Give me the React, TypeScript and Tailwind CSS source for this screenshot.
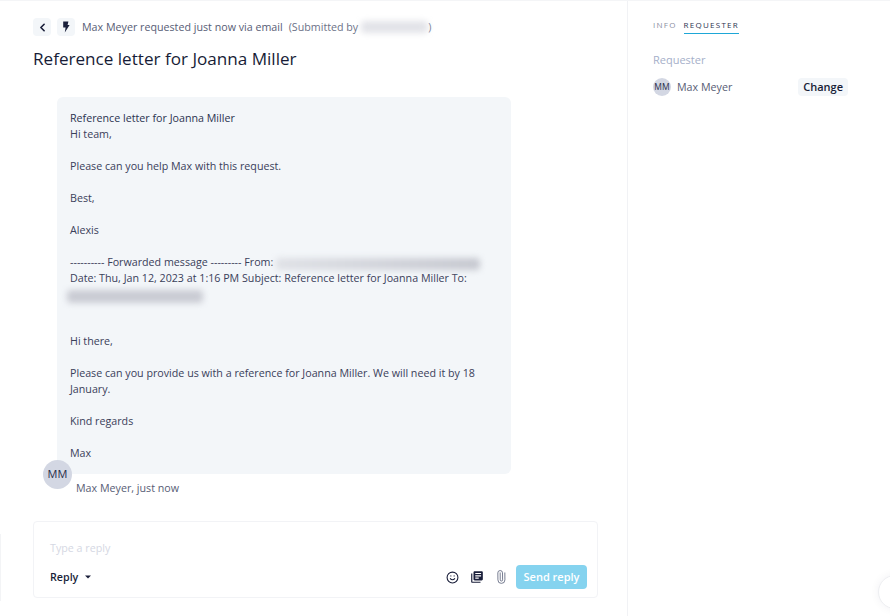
import { ChevronLeft, Paperclip, Smile } from 'lucide-react';
import { MdLibraryBooks } from 'react-icons/md';

function Redacted({ className }: { className: string }) {
  return <span className={`inline-block h-[12px] rounded-sm blur-[3px] align-middle ${className}`} />;
}

export default function App() {
  return (
    <div className="relative flex h-[616px] w-[890px] overflow-hidden border-t border-[#f4f5f7] bg-white font-['Open_Sans',sans-serif] text-[#2c3350]">
      {/* Main column */}
      <div className="flex w-[628px] shrink-0 flex-col border-r border-[#f1f2f5] pl-[33px] pr-[30px] pt-[17px]">
        <header className="flex h-[18px] items-center">
          <button className="flex h-[18px] w-[18px] items-center justify-center rounded bg-[#f3f6f9] text-[#1a1f3a]">
            <ChevronLeft size={13} strokeWidth={3} />
          </button>
          <button className="ml-[6px] flex h-[18px] w-[18px] items-center justify-center rounded bg-[#f3f6f9]">
            <svg width="10" height="12" viewBox="0 0 10 12" fill="#1a1f3a">
              <path d="M2.2 0.5H7.4L6.6 4H8.6L3.8 11.5L4.6 6.4H2.2Z" />
            </svg>
          </button>
          <p className="ml-[7px] flex items-center whitespace-nowrap text-[10.7px] text-[#575d75]">
            Max Meyer requested just now via email
            <span className="ml-[6px] text-[#6c7288]">(Submitted by</span>
            <Redacted className="ml-[3px] w-[67px] bg-[#e2e3e8]" />
            <span className="text-[#6c7288]">)</span>
          </p>
        </header>

        <h1 className="mt-[10px] text-[17.1px] leading-[25px] text-[#171c36]">Reference letter for Joanna Miller</h1>

        {/* Message */}
        <div className="ml-[24px] mt-[26px] h-[377px] w-[454px] rounded-md bg-[#f3f6f9] px-[13px] pt-[13px] text-[10.7px] leading-[16px] text-[#3a405a]">
          <p className="text-[#2c3350]">Reference letter for Joanna Miller</p>
          <p>Hi team,</p>
          <p className="mt-[16px]">Please can you help Max with this request.</p>
          <p className="mt-[16px]">Best,</p>
          <p className="mt-[16px]">Alexis</p>
          <p className="mt-[16px] whitespace-nowrap">
            ---------- Forwarded message --------- From:
            <Redacted className="ml-[3px] mt-[2px] w-[204px] bg-linear-to-r from-[#dfe1e6] to-[#c6c8d0]" />
          </p>
          <p>Date: Thu, Jan 12, 2023 at 1:16 PM Subject: Reference letter for Joanna Miller To:</p>
          <p className="-ml-[3px]">
            <Redacted className="mt-[2px] h-[13px] w-[136px] bg-[#c9cbd3]" />
          </p>
          <p className="mt-[30px]">Hi there,</p>
          <p className="mt-[16px]">Please can you provide us with a reference for Joanna Miller. We will need it by 18 January.</p>
          <p className="mt-[16px]">Kind regards</p>
          <p className="mt-[16px]">Max</p>
        </div>

        <div className="relative z-10 -mt-[14px] ml-[10px] flex">
          <div className="flex h-[29px] w-[29px] items-center justify-center rounded-full bg-[#d3d7e3] text-[11px] text-[#262c49]">MM</div>
          <span className="ml-[4px] mt-[20px] text-[10.7px] leading-[16px] text-[#575d75]">Max Meyer, just now</span>
        </div>

        {/* Reply box */}
        <div className="mt-[25px] h-[77px] w-[565px] rounded border border-[#f2f3f6] pl-[16px] pr-[10px] pt-[18px]">
          <p className="text-[10.7px] leading-[16px] text-[#d5d8e3]">Type a reply</p>
          <div className="mt-[9px] flex h-[24px] items-center">
            <span className="text-[10.7px] font-semibold text-[#1a1f3a]">Reply</span>
            <svg className="ml-[7px]" width="6" height="4" viewBox="0 0 6 4" fill="#1a1f3a">
              <path d="M0 0.5H6L3 3.5Z" />
            </svg>
            <Smile className="ml-auto text-[#1a1f3a]" size={13} strokeWidth={2} />
            <MdLibraryBooks className="ml-[11px] text-[#1a1f3a]" size={14} />
            <Paperclip className="ml-[10px] -rotate-45 text-[#6c7288]" size={14} strokeWidth={1.5} />
            <button className="ml-[8px] h-[24px] w-[71px] rounded bg-[#85d3ef] text-[11px] font-semibold text-white">Send reply</button>
          </div>
        </div>
      </div>

      {/* Sidebar */}
      <aside className="flex-1 pl-[25px] pr-[42px] pt-[17px]">
        <nav className="flex text-[8px] leading-[12px] tracking-[1.25px]">
          <span className="pt-[1px] text-[#8b8f9f]">INFO</span>
          <span className="ml-[7px] border-b border-[#1ea7d7] pb-[2px] pt-[1px] text-[#2c3350]">REQUESTER</span>
        </nav>
        <p className="mt-[18px] text-[11px] leading-[16px] text-[#a5afc9]">Requester</p>
        <div className="mt-[10px] flex items-center">
          <div className="flex h-[18px] w-[18px] items-center justify-center rounded-full bg-[#d3d7e3] text-[8.5px] text-[#262c49]">MM</div>
          <span className="ml-[6px] text-[10.7px] text-[#575d75]">Max Meyer</span>
          <button className="ml-auto h-[18px] rounded bg-[#f3f6f9] px-[5px] text-[11px] font-semibold text-[#171c36]">Change</button>
        </div>
      </aside>

      {/* Floating launcher cut off by the window edge */}
      <div className="absolute -right-[22px] top-[574px] h-[34px] w-[34px] rounded-full border border-[#eeeff2] bg-white shadow-[0_0_10px_rgba(30,40,70,0.06)]" />
      <div className="absolute left-0 top-[533px] h-[67px] w-px bg-[#f3f4f6]" />
    </div>
  );
}
